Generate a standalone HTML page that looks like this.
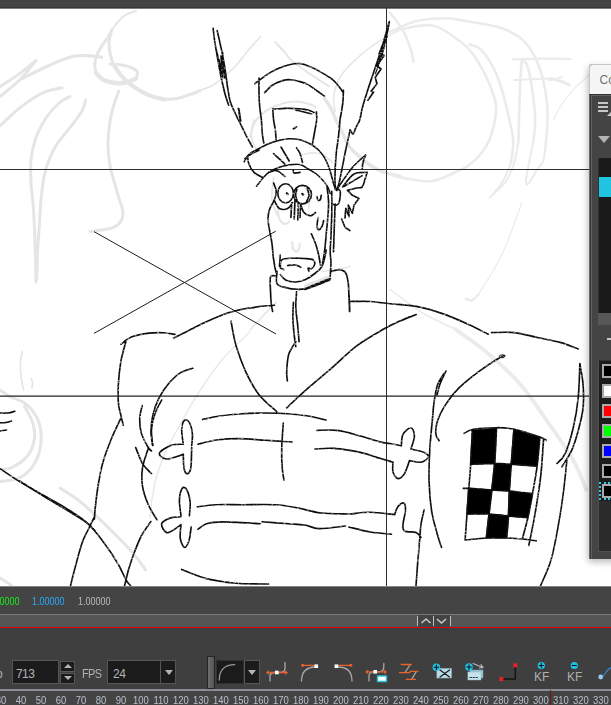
<!DOCTYPE html>
<html><head><meta charset="utf-8"><title>Animation Editor</title>
<style>
html,body{margin:0;padding:0;background:#fff;}
body{-webkit-font-smoothing:antialiased;width:611px;height:705px;position:relative;overflow:hidden;font-family:"Liberation Sans",sans-serif;}
.abs{position:absolute;}
#topbar{left:0;top:0;width:611px;height:9px;background:#444;border-bottom:1px solid #7c7c7c;box-sizing:border-box;box-shadow:inset 0 -1px 0 #383838;}
#canvas{left:0;top:9px;width:611px;height:577px;background:#fff;}
#bottom{left:0;top:586px;width:611px;height:119px;background:#444;}
#vals span{position:absolute;top:9px;font-size:11.4px;line-height:12px;white-space:nowrap;transform:scaleX(0.79);transform-origin:0 50%;}
#hline{left:0;top:28px;width:611px;height:1px;background:#787878;}
#band{left:0;top:29px;width:611px;height:12px;background:#555;}
#redline{left:0;top:41px;width:611px;height:1px;background:#e10000;}
#lower{left:0;top:42px;width:611px;height:77px;background:#3f3f3f;}
.inp{position:absolute;background:#1b1b1b;border:1px solid #565656;box-sizing:border-box;color:#b4b4b4;font-size:12px;line-height:22px;}
.lbl{position:absolute;color:#b0b0b0;font-size:12px;line-height:14px;white-space:nowrap;}
#ruler{left:0;top:103px;width:611px;height:16px;background:#444;border-top:2px solid #8b8e96;box-sizing:border-box;}
#ruler span{position:absolute;top:3px;width:30px;margin-left:-15px;text-align:center;font-size:11.7px;line-height:12px;color:#b9c0cc;transform:scaleX(0.81);}
#panel{left:589px;top:64px;width:41px;height:495px;background:#444;box-shadow:-1px 3px 7px rgba(0,0,0,0.28);border-radius:4px 0 0 2px;}
#ptitle{left:0;top:0;width:41px;height:30px;background:#f5f5f5;border-top-left-radius:4px;border:1px solid #c6c6c6;border-right:0;border-bottom:0;box-sizing:border-box;color:#6e6e6e;font-size:12px;line-height:30px;}
.sw{position:absolute;left:13px;width:20px;height:14px;box-sizing:border-box;border:2px solid #aaa;}
</style></head>
<body>
<div id="topbar" class="abs"></div>
<div id="canvas" class="abs"></div>

<svg class="abs" style="left:0;top:0" width="611" height="586" viewBox="0 0 611 586" fill="none" stroke-linecap="round" stroke-linejoin="round">
<g stroke="#e5e5e5">
<path stroke-width="2" d="M136.0 11.0C134.0 11.8 127.8 13.2 124.0 16.0C120.2 18.8 116.0 24.0 113.0 28.0C110.0 32.0 107.2 38.0 106.0 40.0M275.3 42.0C276.9 43.8 282.4 49.7 285.0 52.7C287.6 55.7 287.8 57.1 291.0 60.0C294.2 62.9 299.4 66.5 304.0 69.8C308.6 73.1 314.6 76.9 318.7 79.6C322.8 82.3 327.0 85.1 328.6 86.2M250.0 137.0C250.8 134.5 252.3 126.4 255.0 122.0C257.7 117.6 261.8 113.8 266.4 110.7C271.0 107.6 277.3 104.9 282.7 103.4C288.1 101.9 294.1 101.4 299.0 101.7C303.9 102.0 309.2 104.0 312.0 105.0C314.8 106.0 314.9 107.1 315.5 107.5M278.0 207.0C278.2 208.8 278.0 215.2 279.0 218.0C280.0 220.8 282.3 223.3 284.0 224.0C285.7 224.7 288.2 222.3 289.0 222.0M292.0 242.0C292.3 243.3 293.0 248.5 294.0 250.0C295.0 251.5 297.0 252.0 298.0 251.0C299.0 250.0 299.7 245.2 300.0 244.0M305.0 187.0C305.7 188.5 308.3 192.5 309.0 196.0C309.7 199.5 309.0 206.0 309.0 208.0M292.0 248.0C292.7 248.7 294.8 251.8 296.0 252.0C297.2 252.2 298.5 249.5 299.0 249.0"/>
<path stroke-width="3" d="M106.0 40.0C104.7 42.0 100.0 48.3 98.1 52.3C96.2 56.3 95.1 60.5 94.8 64.0C94.5 67.5 95.9 71.7 96.1 73.2M136.0 78.4C136.2 77.3 138.3 73.8 137.4 71.9C136.5 70.1 133.7 68.5 130.8 67.3C128.0 66.1 123.8 65.2 120.3 64.7C116.8 64.2 111.6 64.4 109.9 64.3M111.8 30.0C111.4 31.8 109.5 36.8 109.2 40.5C108.9 44.2 109.2 48.4 109.9 52.3C110.6 56.2 112.6 62.0 113.1 64.0M165.0 99.4C167.0 99.2 172.3 99.5 177.0 98.5C181.7 97.5 189.2 94.8 193.0 93.5C196.8 92.2 198.8 91.0 200.0 90.5M0.0 86.7C3.3 84.5 13.6 78.0 19.6 73.6C25.6 69.2 33.3 62.7 36.0 60.5M36.0 60.5C33.3 63.8 25.6 74.0 19.6 80.0C13.6 86.0 3.3 93.8 0.0 96.5M19.6 80.0C24.5 77.6 39.8 69.5 49.0 65.5C58.2 61.5 66.2 57.4 75.0 56.0C83.8 54.6 97.1 56.8 101.5 57.0M62.0 87.7C58.8 88.6 49.6 89.6 42.5 93.0C35.4 96.4 26.7 102.5 19.6 108.0C12.5 113.5 3.3 123.0 0.0 126.0M70.0 96.5C68.2 97.6 63.0 99.4 59.0 103.0C55.0 106.6 49.8 112.2 46.0 118.0C42.2 123.8 38.5 130.5 36.0 137.5C33.5 144.5 31.8 152.4 31.0 160.0C30.2 167.6 30.7 176.3 31.0 183.0C31.3 189.7 32.1 192.8 32.7 200.0C33.3 207.2 34.0 217.3 34.4 226.0C34.8 234.7 35.0 242.7 35.3 252.0C35.6 261.3 35.9 277.0 36.0 282.0M85.7 100.0C85.1 101.8 84.6 106.4 82.0 111.0C79.4 115.6 74.2 122.1 70.0 127.6C65.8 133.1 60.5 138.6 57.0 144.0C53.5 149.4 51.2 154.5 49.0 160.0C46.8 165.5 45.3 170.3 44.0 177.0C42.7 183.7 41.8 191.8 41.0 200.0C40.2 208.2 39.9 217.3 39.3 226.0C38.7 234.7 38.0 243.0 37.6 252.0C37.2 261.0 36.9 275.3 36.7 280.0M118.5 91.6C117.6 94.3 114.5 102.6 113.0 108.0C111.5 113.4 110.4 118.0 109.6 124.0C108.8 130.0 108.0 137.4 108.0 144.0C108.0 150.6 108.5 157.1 109.6 163.6C110.7 170.1 112.8 176.9 114.5 183.0C116.2 189.1 118.1 195.5 119.5 200.0C120.9 204.5 122.3 206.7 122.7 210.0C123.1 213.3 123.2 216.8 121.8 219.6C120.4 222.4 118.0 225.1 114.6 226.8C111.2 228.5 105.6 229.2 101.5 230.0C97.4 230.8 91.9 231.4 90.0 231.7M0.0 390.0C1.6 391.1 5.7 394.3 9.8 396.5C13.9 398.7 20.1 399.8 24.5 403.0C28.9 406.2 33.2 411.1 36.0 416.0C38.8 420.9 40.5 426.5 41.0 432.5C41.5 438.5 41.0 446.0 39.3 452.0C37.6 458.0 34.5 464.2 31.0 468.6C27.4 473.0 23.2 476.2 18.0 478.4C12.8 480.6 3.0 481.1 0.0 481.6M24.5 406.4C25.9 409.1 31.1 417.3 32.7 422.7C34.4 428.1 35.2 433.5 34.4 439.0C33.6 444.5 31.4 450.8 27.8 455.5C24.2 460.2 17.6 464.6 13.0 467.0C8.4 469.4 2.2 469.5 0.0 470.0M60.5 488.2C64.0 490.7 74.4 497.0 81.8 503.0C89.2 509.0 97.6 517.4 104.7 524.2C111.8 531.0 118.9 538.1 124.4 543.8C129.9 549.5 134.0 554.2 137.5 558.6C141.0 563.0 144.2 568.1 145.6 570.0M0.0 578.0C1.3 578.8 6.0 581.7 8.0 583.0C10.0 584.3 11.3 585.5 12.0 586.0"/>
<path stroke-width="4.4" d="M96.1 73.2C97.3 74.3 100.1 78.1 103.3 79.7C106.5 81.3 111.2 82.5 115.1 83.0C119.0 83.5 123.4 83.2 126.9 82.4C130.4 81.6 134.5 79.1 136.0 78.4"/>
<path stroke-width="4.2" d="M113.1 64.0C114.3 65.8 117.6 71.2 120.3 74.5C123.0 77.8 126.0 80.9 129.5 83.7C133.0 86.5 137.4 89.3 141.3 91.5C145.2 93.7 149.2 95.5 153.1 96.8C157.0 98.1 163.0 99.0 165.0 99.4"/>
<path stroke-width="1.6" d="M200.0 90.5C202.3 89.5 208.6 88.1 214.0 84.5C219.4 80.9 226.9 74.8 232.7 69.0C238.5 63.2 244.4 54.9 249.0 49.5C253.6 44.1 258.6 38.6 260.5 36.4M22.3 351.0C22.0 353.1 20.5 359.1 20.3 363.7C20.1 368.3 20.8 374.0 21.3 378.4C21.9 382.8 23.2 388.1 23.6 390.0M31.0 378.4C31.2 379.0 32.3 380.4 32.5 382.0C32.7 383.6 32.1 387.0 32.0 388.0"/>
<path stroke-width="2.6" d="M85.0 55.5C86.3 55.6 90.2 55.7 93.0 56.0C95.8 56.3 100.5 57.2 102.0 57.5"/>
<path stroke-width="1.4" d="M119.7 90.2C119.0 91.8 116.7 96.7 115.5 100.0C114.3 103.3 113.0 108.3 112.5 110.0"/>
<path stroke-width="1.2" d="M250.0 331.9C245.5 336.4 231.4 348.7 222.8 358.9C214.2 369.1 205.2 382.6 198.2 393.3C191.2 404.0 186.2 413.5 181.0 422.8C175.8 432.1 171.0 440.3 167.0 449.0C163.0 457.7 159.5 466.8 157.0 475.0C154.5 483.2 153.4 490.8 152.2 498.0C151.0 505.2 150.4 514.7 150.0 518.0"/>
<path stroke-width="3.4" d="M324.5 98.6C325.6 100.2 329.1 104.8 331.0 108.4C332.9 112.0 334.1 115.9 336.0 120.0C337.9 124.1 340.4 128.6 342.6 133.0C344.8 137.4 346.1 142.1 349.1 146.2C352.1 150.3 356.5 154.0 360.6 157.6C364.7 161.2 369.2 164.9 373.6 167.5C378.0 170.1 382.3 171.7 386.7 173.2C391.1 174.7 397.8 175.9 400.0 176.5"/>
<path stroke-width="1.5" d="M400.0 29.8C397.0 31.4 387.6 36.1 381.8 39.6C376.1 43.1 370.7 46.9 365.5 51.0C360.3 55.1 354.8 60.1 350.7 64.2C346.6 68.3 343.5 71.5 340.9 75.6C338.3 79.7 336.4 84.6 335.2 88.7C334.0 92.8 333.6 96.4 333.6 100.2C333.6 104.0 334.9 109.8 335.2 111.7M254.0 120.0C253.6 121.6 251.9 126.3 251.6 129.8C251.3 133.4 251.6 138.0 252.4 141.3C253.2 144.6 255.8 148.1 256.5 149.5M273.6 177.3C273.3 180.9 271.4 192.3 272.0 198.6C272.6 204.9 276.2 212.3 277.0 215.0M300.0 155.2C302.2 154.8 308.9 152.6 313.0 152.7C317.1 152.8 321.2 154.4 324.5 156.0C327.8 157.6 331.3 161.4 332.7 162.5M250.0 330.2C252.0 328.0 257.6 321.6 262.0 317.0C266.4 312.4 273.8 304.8 276.2 302.4M322.0 271.3C324.3 271.1 331.3 270.8 336.0 270.0C340.7 269.2 347.7 267.0 350.0 266.4"/>
<path stroke-width="6" d="M307.0 286.5C308.5 286.0 312.3 284.8 316.0 283.5C319.7 282.2 326.8 279.3 329.0 278.5"/>
</g>
<g stroke="#ebebeb">
<path stroke-width="2.6" d="M390.0 32.0C394.2 30.2 406.3 23.6 415.5 21.3C424.7 19.0 437.4 18.4 445.3 18.3C453.2 18.2 457.0 19.7 463.0 20.6C469.0 21.5 474.7 22.3 481.3 23.6C487.9 24.9 495.9 25.9 502.6 28.5C509.3 31.1 516.4 34.5 521.7 39.1C527.0 43.7 531.0 49.5 534.5 56.2C538.0 63.0 540.9 71.4 543.0 79.6C545.1 87.8 546.5 97.3 547.2 105.1C547.9 112.9 547.6 118.9 547.2 126.4C546.9 133.9 545.5 146.1 545.1 150.0M390.0 12.8C392.1 15.6 399.2 23.4 402.8 29.8C406.4 36.2 409.5 45.7 411.3 51.0C413.1 56.3 413.0 59.9 413.4 61.7M398.5 29.8C404.2 29.1 422.4 23.6 432.6 25.5C442.9 27.4 453.3 36.5 460.0 41.3C466.7 46.0 468.6 48.3 472.8 54.0C477.1 59.7 482.0 68.2 485.5 75.3C489.0 82.4 492.2 90.5 494.0 96.6C495.8 102.7 496.7 104.9 496.0 112.0C495.3 119.1 492.6 131.7 489.8 139.0C487.0 146.3 482.9 151.4 479.0 156.0C475.1 160.6 469.6 164.5 466.4 166.8C463.2 169.1 465.6 167.6 460.0 170.0C454.4 172.4 441.4 179.6 432.6 181.0C423.8 182.4 414.1 179.8 407.0 178.7C399.9 177.6 392.8 175.2 390.0 174.5M469.6 44.5C471.6 45.4 477.2 45.7 481.3 49.8C485.4 53.9 490.4 61.8 494.0 68.9C497.6 76.0 500.1 84.1 502.6 92.3C505.1 100.5 507.2 109.8 509.0 118.0C510.8 126.2 512.9 133.9 513.2 141.3C513.5 148.7 511.4 159.1 511.0 162.6M521.7 60.4C521.5 64.3 520.6 74.6 520.2 83.8C519.8 93.0 519.4 106.1 519.1 115.7C518.8 125.3 518.6 137.0 518.5 141.3M521.7 60.4C522.6 61.1 525.4 60.8 527.0 64.7C528.6 68.6 529.9 74.9 531.3 83.8C532.7 92.7 534.9 108.4 535.2 118.0C535.6 127.6 533.7 137.4 533.4 141.3"/>
<path stroke-width="2" d="M545.1 150.0C544.8 151.9 544.4 157.9 543.0 161.3C541.6 164.7 538.6 167.6 536.6 170.6C534.6 173.6 532.9 177.2 531.3 179.6C529.7 182.0 527.7 184.1 527.0 185.0M511.0 162.6C509.6 165.8 506.1 175.8 502.6 181.7C499.1 187.5 491.9 195.0 489.8 197.7M518.5 141.3C517.8 144.9 516.4 155.9 514.3 162.6C512.2 169.3 509.8 175.8 505.7 181.7C501.6 187.5 492.4 195.0 489.8 197.7M533.4 141.3C532.7 144.9 530.3 156.2 529.1 162.6C527.9 169.0 526.4 175.9 526.0 179.6C525.6 183.3 526.8 184.1 527.0 185.0M549.0 80.6L562.0 77.0"/>
<path stroke-width="2.2" d="M513.2 59.4C517.7 59.3 530.4 58.7 540.0 58.6C549.6 58.5 565.5 58.9 570.6 58.9M514.3 80.0L551.5 78.5"/>
<path stroke-width="3" d="M551.5 78.5C552.9 78.9 557.0 79.9 560.0 81.0C563.0 82.1 568.0 84.2 569.6 84.9"/>
<path stroke-width="1.2" d="M590.0 74.3C587.1 77.0 577.8 84.7 572.8 90.2C567.8 95.7 563.2 102.2 560.0 107.2C556.8 112.2 554.7 117.9 553.6 120.0M521.7 203.0C520.3 206.9 516.2 218.6 513.2 226.4C510.3 234.2 507.1 243.0 504.0 250.0C500.9 257.0 499.0 260.8 494.7 268.2C490.4 275.6 481.1 290.0 478.4 294.4"/>
<path stroke-width="1.5" d="M390.0 289.4C391.4 290.4 393.1 291.8 398.5 295.7C403.9 299.6 413.2 307.4 422.7 313.0C432.2 318.6 450.0 326.6 455.5 329.3"/>
<path stroke-width="3.8" d="M455.5 329.3C460.9 333.3 477.3 344.2 488.2 353.5C499.1 362.8 511.1 373.8 520.9 385.0C530.7 396.2 538.4 408.5 547.1 421.0C555.8 433.5 566.8 448.7 573.3 460.2C579.8 471.7 584.2 485.0 586.4 490.0"/>
<path stroke-width="2.4" d="M478.4 294.4C477.3 295.4 474.1 299.5 472.0 300.3C469.9 301.1 467.0 299.2 466.0 299.0"/>
</g>
<g stroke="#2e2e2e" stroke-width="1" shape-rendering="crispEdges">
<path d="M0 169.5H590M386.5 8V586"/>
<path shape-rendering="auto" stroke="#222" stroke-width="1.3" d="M0 396.15H590"/>
</g>
<g stroke="#1c1c1c" stroke-width="1">
<path d="M94.3 231.8L275.7 333.8M94.3 333.2L275.4 231.4"/>
</g>
<g fill="#000" stroke="#000" stroke-width="0.8">
<path d="M472.5 430.1L496.5 428.3L494.7 463.4L470.7 464.3Z"/>
<path d="M514.0 429.2L539.9 437.5L537.1 466.1L511.3 464.3Z"/>
<path d="M494.7 463.4L511.3 464.3L509.4 491.0L491.9 490.0Z"/>
<path d="M468.8 488.3L491.9 490.0L489.1 514.0L467.0 514.0Z"/>
<path d="M509.4 491.0L532.5 493.8L527.9 517.8L508.5 516.0Z"/>
<path d="M489.1 514.0L508.5 516.0L506.7 538.0L486.4 538.0Z"/>
</g>
<defs><filter id="pencil" x="0" y="0" width="611" height="586" filterUnits="userSpaceOnUse"><feTurbulence type="fractalNoise" baseFrequency="0.3 0.55" numOctaves="3" seed="7" result="n"/><feColorMatrix in="n" type="matrix" values="0 0 0 0 0  0 0 0 0 0  0 0 0 0 0  0 0 0 -2.4 2.3" result="a"/><feComposite in="SourceGraphic" in2="a" operator="in"/></filter></defs>
<g stroke="#0c0c0c" filter="url(#pencil)">
<path stroke-width="1.65" d="M213.1 28.2C213.4 30.4 214.0 36.7 214.7 41.3C215.4 45.9 216.2 50.5 217.2 56.0C218.2 61.5 219.3 68.0 220.5 74.0C221.7 80.0 223.2 86.8 224.5 92.0C225.8 97.2 227.9 102.9 228.6 105.1M217.2 30.6C217.6 32.4 218.8 37.6 219.6 41.3C220.4 45.0 221.3 48.6 222.1 52.7C222.9 56.8 223.8 61.7 224.5 65.8C225.2 69.9 225.6 73.5 226.2 77.3C226.8 81.1 227.1 84.6 227.8 88.7C228.5 92.8 229.1 97.7 230.3 101.8C231.5 105.9 233.8 110.3 235.2 113.3C236.6 116.3 237.5 118.0 238.5 120.0C239.5 122.0 239.7 122.3 241.0 125.0C242.3 127.7 244.7 132.7 246.6 136.4C248.5 140.1 251.4 145.2 252.4 147.0M216.0 49.0L219.0 62.0L217.5 55.0L221.0 70.0L219.0 60.0L222.5 77.0L221.0 56.0L223.5 72.0L222.5 52.0L224.5 78.0M254.8 83.8C256.6 82.4 261.8 78.1 265.5 75.6C269.2 73.1 273.2 70.8 277.0 69.0C280.8 67.2 284.6 65.9 288.4 65.0C292.2 64.1 296.4 63.3 300.0 63.6C303.6 63.9 306.2 65.1 309.8 66.6C313.4 68.1 317.5 70.2 321.3 72.4C325.1 74.6 329.7 77.2 332.7 79.7C335.7 82.2 337.5 84.9 339.3 87.1C341.1 89.3 342.7 91.8 343.4 92.8M259.0 78.0C259.0 80.6 258.9 88.8 259.0 93.6C259.1 98.4 259.3 102.3 259.7 106.7C260.1 111.1 261.0 115.6 261.4 120.0C261.8 124.4 261.8 129.2 262.2 133.0C262.6 136.8 263.5 141.3 263.8 143.0M264.6 92.8C265.8 91.6 269.1 87.5 272.0 85.5C274.9 83.5 278.8 81.9 281.8 80.9C284.8 79.9 287.0 79.6 290.0 79.7C293.0 79.8 297.0 80.8 300.0 81.6C303.0 82.4 305.5 83.1 308.2 84.6C310.9 86.1 313.7 88.5 316.4 90.4C319.1 92.3 323.1 95.1 324.5 96.1M343.4 90.4C343.3 92.3 343.3 97.7 342.9 101.8C342.5 105.9 341.4 112.0 340.9 115.0C340.4 118.0 340.4 116.4 340.0 120.0C339.6 123.6 339.1 131.0 338.5 136.4C337.9 141.8 336.9 147.3 336.3 152.7C335.8 158.1 335.4 163.5 335.2 169.0C335.0 174.5 334.9 181.9 335.2 185.5C335.5 189.1 336.5 189.6 336.8 190.4M296.0 110.2C297.3 110.5 301.4 111.4 304.0 112.0C306.6 112.6 310.2 113.7 311.5 114.0M272.8 109.2C272.9 111.0 273.2 116.6 273.6 120.0C274.0 123.4 274.9 126.5 275.3 129.8C275.7 133.1 276.0 138.0 276.1 139.6M316.4 111.7C316.4 113.1 317.0 116.7 316.7 120.0C316.4 123.3 315.4 127.4 314.7 131.5C314.0 135.6 312.7 142.3 312.3 144.5M389.2 21.6C388.5 24.1 386.6 31.2 385.1 36.4C383.6 41.6 382.1 46.7 380.2 52.7C378.3 58.7 375.8 65.9 373.6 72.4C371.4 79.0 369.0 86.0 367.1 92.0C365.2 98.0 363.4 103.7 362.2 108.4C361.0 113.1 360.8 116.7 359.7 120.0C358.6 123.3 356.7 125.9 355.6 128.2C354.5 130.5 354.1 133.7 353.2 134.0C352.3 134.3 350.5 130.5 350.0 129.8M389.2 22.5C388.8 24.5 387.9 30.2 386.7 34.7C385.5 39.2 383.4 44.6 381.8 49.5C380.2 54.4 377.7 61.8 376.9 64.2M386.0 36.0L379.0 54.0L384.3 55.2L376.9 65.8L381.0 69.0L375.3 77.3L376.9 83.8L371.2 91.2L373.6 92.0L367.9 100.2M350.0 129.8C349.9 130.6 349.8 131.4 349.1 134.7C348.4 138.0 346.9 144.3 345.8 149.5C344.7 154.7 343.7 160.4 342.6 165.8C341.5 171.2 340.2 178.4 339.3 182.2C338.4 186.0 337.6 187.6 337.3 188.7M247.5 156.8C247.8 158.0 247.9 161.6 249.0 164.2C250.1 166.8 251.8 170.2 254.0 172.4C256.2 174.6 260.8 176.5 262.2 177.3M273.6 153.6L285.0 164.2M281.0 147.0L289.2 161.0M296.6 147.8C297.2 148.8 299.0 151.1 300.0 153.5C301.0 155.9 302.1 161.0 302.5 162.5M268.7 172.4C270.1 172.1 274.3 170.0 277.0 170.7C279.7 171.4 283.7 175.5 285.0 176.5M293.3 170.0C293.4 170.5 292.9 172.6 294.0 173.0C295.1 173.4 299.0 172.5 300.0 172.4M273.6 183.0C274.0 184.4 276.1 188.6 276.2 191.3C276.3 194.1 275.6 196.5 274.5 199.5C273.4 202.5 270.7 206.1 269.6 209.3C268.5 212.6 268.0 215.4 268.0 219.0C268.0 222.6 268.9 226.5 269.6 230.6C270.3 234.7 271.4 239.5 272.0 243.6C272.6 247.7 272.7 252.3 273.0 255.0C273.3 257.7 273.3 257.4 273.7 259.8C274.1 262.2 274.8 267.2 275.4 269.6C275.9 272.1 276.7 273.7 277.0 274.5M277.8 193.3a7.8 9.6 0 1 0 15.6 0a7.8 9.6 0 1 0 -15.6 0M293.5 194.6a9.0 9.2 0 1 0 18.0 0a9.0 9.2 0 1 0 -18.0 0M307.4 188.7C307.7 189.8 309.1 193.1 309.0 195.3C308.9 197.5 306.9 200.7 306.5 201.8M296.8 189.5C296.6 190.4 295.6 193.2 295.6 195.0C295.6 196.8 296.8 199.6 297.0 200.5M274.5 201.0C275.3 202.2 277.3 207.2 279.5 208.5C281.7 209.8 285.4 209.5 287.6 208.5C289.8 207.5 291.7 203.7 292.5 202.7M300.7 204.4C301.2 205.8 302.4 210.6 304.0 212.5C305.6 214.4 308.7 215.8 310.6 215.8C312.5 215.8 314.7 213.1 315.5 212.5M291.7 202.7L290.9 217.5M295.0 199.5L294.2 219.0M298.3 202.0L297.8 220.0M300.7 204.4L300.0 217.5M317.1 196.5C317.2 197.1 317.4 199.8 318.0 200.3C318.6 200.8 319.9 200.3 320.4 199.5C320.9 198.7 321.1 196.1 321.2 195.4M318.0 217.5C317.9 218.8 317.0 223.6 317.1 225.6C317.2 227.6 317.9 229.5 318.7 229.7C319.5 229.8 321.2 228.0 322.0 226.5C322.8 225.0 323.3 221.7 323.6 220.7M311.4 233.8C312.1 235.4 314.3 240.1 315.5 243.6C316.7 247.1 317.9 251.4 318.7 255.0C319.5 258.6 320.1 263.3 320.4 265.0M327.0 186.4C327.3 189.1 328.5 197.3 328.6 202.7C328.7 208.1 328.1 213.5 327.7 219.0C327.3 224.5 326.6 230.0 326.1 235.5C325.6 241.0 325.2 246.7 324.5 251.8C323.8 256.9 322.4 264.0 322.0 266.4M331.8 191.3C331.8 194.6 331.9 203.6 331.8 211.0C331.7 218.4 331.3 228.7 331.0 235.5C330.7 242.3 330.2 247.2 330.2 251.8C330.2 256.4 331.0 258.9 331.0 263.0C331.0 267.1 330.3 274.0 330.2 276.2M335.1 204.0C335.0 207.9 334.6 219.3 334.3 227.3C334.0 235.3 333.6 247.7 333.5 251.8M335.2 189.6C336.0 189.7 339.3 188.4 340.0 190.4C340.7 192.4 339.8 199.4 339.3 201.8C338.8 204.2 337.9 204.6 336.8 205.0C335.7 205.4 333.4 204.4 332.7 204.3M365.5 155.2C365.1 156.4 363.6 160.2 363.0 162.5C362.4 164.8 362.3 167.9 362.2 169.0M342.6 187.0C344.5 184.8 349.9 176.4 354.0 174.0C358.1 171.6 364.9 172.7 367.1 172.4M344.2 186.3L362.2 175.6M367.1 172.4C366.7 173.8 365.4 178.2 364.6 180.6C363.8 183.0 363.6 185.8 362.2 187.0C360.8 188.2 358.9 187.4 356.5 188.0C354.1 188.6 349.0 190.0 347.5 190.4M347.5 190.4L352.4 195.3L358.9 198.6L354.0 205.0L352.4 213.3L348.3 205.0L349.1 216.6L345.8 208.4L345.0 218.0M341.7 219.0L345.0 227.3L350.0 230.6M280.3 268.0C280.6 266.6 279.8 261.4 281.9 259.8C283.9 258.2 288.9 258.4 292.6 258.2C296.3 258.0 300.6 258.2 304.0 258.5C307.4 258.8 311.2 258.8 313.0 259.8C314.8 260.8 314.9 263.2 314.6 264.7C314.3 266.2 312.5 268.2 311.4 268.8C310.3 269.4 308.5 267.6 308.1 268.0C307.7 268.4 308.8 270.8 308.9 271.3M280.3 268.0L283.6 269.6M280.3 255.0L279.5 266.4M287.6 265.5C288.8 265.4 292.8 264.7 295.0 265.0C297.2 265.3 299.8 266.8 300.7 267.2M280.3 274.5C281.2 275.5 283.4 279.1 286.0 280.3C288.6 281.6 292.5 282.1 295.8 282.0C299.1 281.9 302.3 281.0 305.6 279.5C308.9 278.0 312.8 275.2 315.5 273.0C318.2 270.8 320.4 269.4 322.0 266.4C323.6 263.4 324.6 257.7 325.3 255.0C326.0 252.3 326.0 250.8 326.1 250.0M277.0 271.3C277.0 273.4 275.5 280.9 277.0 283.6C278.5 286.3 282.6 286.7 286.0 287.6C289.4 288.6 294.2 289.2 297.5 289.3C300.8 289.4 302.6 289.3 305.6 288.5C308.6 287.7 312.2 285.8 315.5 284.4C318.8 283.0 322.9 281.3 325.3 280.3C327.8 279.3 329.4 278.9 330.2 278.6M275.4 275.9C274.6 276.1 271.3 274.5 270.5 277.0C269.7 279.5 270.4 286.5 270.5 291.0C270.6 295.5 270.9 300.6 271.3 304.0C271.7 307.4 272.4 310.2 272.6 311.4M250.0 308.1C251.6 307.8 255.7 307.0 259.8 306.5C263.9 306.0 272.1 305.5 274.5 305.3M331.8 271.3C333.2 271.0 337.7 269.3 340.0 269.6C342.3 269.9 344.3 270.8 345.7 273.0C347.1 275.2 347.6 278.4 348.2 282.7C348.8 287.0 348.9 296.3 349.0 299.0M296.6 291.7C296.5 294.3 295.7 302.0 295.8 307.3C295.9 312.6 296.9 317.9 297.5 323.6C298.1 329.3 298.8 338.7 299.1 341.7M293.4 302.4C293.3 305.1 292.8 313.2 292.9 318.7C293.0 324.1 293.7 330.5 294.2 335.1C294.7 339.8 295.5 344.7 295.8 346.6M295.8 341.7C295.3 342.5 293.8 344.3 292.6 346.6C291.4 348.9 289.4 351.3 288.4 355.5C287.4 359.7 286.9 367.6 286.7 371.8C286.5 376.1 287.3 379.5 287.4 381.0M121.0 344.2C122.8 343.0 127.2 338.6 131.9 336.8C136.6 335.0 143.8 333.8 149.1 333.1C154.4 332.4 159.5 332.5 163.8 332.7C168.1 332.9 173.1 334.1 174.9 334.4M173.7 338.0C176.1 336.8 183.5 333.1 188.4 330.7C193.3 328.2 197.4 326.0 203.1 323.3C208.8 320.6 217.1 316.9 222.8 314.7C228.5 312.5 233.0 311.4 237.5 310.3C242.0 309.2 247.9 308.2 250.0 307.8M349.6 301.5C353.0 301.5 363.5 301.1 370.2 301.5C376.9 301.9 382.1 302.9 389.8 303.7C397.5 304.5 407.4 304.8 416.2 306.4C425.0 308.0 433.7 310.6 442.4 313.6C451.1 316.6 461.0 321.0 468.6 324.4C476.2 327.8 484.9 332.6 488.2 334.2M491.5 332.6C495.3 332.6 506.8 331.8 514.4 332.6C522.0 333.4 529.7 335.9 537.3 337.5C544.9 339.1 553.4 340.5 560.2 342.4C567.0 344.3 575.2 347.9 578.2 349.0M231.0 321.0C231.8 325.1 233.5 337.1 236.0 345.6C238.5 354.1 242.0 363.6 245.8 371.8C249.6 380.0 253.8 388.0 259.0 394.7C264.2 401.4 274.0 408.9 277.0 411.8M286.7 407.8C290.2 404.5 300.6 394.7 308.0 388.2C315.4 381.7 322.8 375.7 331.0 368.6C339.2 361.5 348.3 352.2 357.0 345.6C365.7 339.1 376.1 333.4 383.3 329.3C390.5 325.2 394.5 323.5 400.0 321.0C405.5 318.5 413.5 315.6 416.2 314.5M125.8 341.7C125.0 345.0 122.1 354.4 120.9 361.4C119.7 368.4 118.8 376.6 118.4 383.5C118.0 390.4 118.0 397.7 118.4 403.0C118.8 408.3 120.1 411.7 120.9 415.4C121.7 419.1 122.9 423.6 123.3 425.2M121.0 417.8C119.4 421.3 114.3 431.6 111.3 439.0C108.3 446.4 105.2 454.3 103.0 462.0C100.8 469.7 99.4 477.9 98.2 485.0C97.0 492.1 96.2 498.9 95.6 504.6C94.9 510.3 94.5 516.8 94.3 519.3M95.0 516.0C93.8 518.3 90.2 525.4 88.0 530.0C85.8 534.6 84.2 536.6 81.8 543.8C79.4 551.0 75.5 566.2 73.6 573.3C71.7 580.4 70.9 584.2 70.4 586.4M192.8 368.3C190.8 369.0 185.0 369.9 181.0 372.4C177.0 374.9 172.4 379.2 168.7 383.5C165.0 387.8 161.6 392.9 158.9 398.2C156.2 403.5 154.1 409.8 152.8 415.4C151.5 421.0 151.0 427.0 151.0 432.0C151.0 437.0 152.4 443.2 152.7 445.4M142.2 405.6C141.8 407.7 140.0 413.4 139.8 417.9C139.6 422.4 139.8 427.8 141.2 432.6C142.5 437.5 146.2 443.9 147.9 447.0C149.6 450.1 150.9 450.3 151.5 451.0M135.7 447.6C136.8 450.2 139.9 459.1 142.5 463.5C145.1 467.9 150.0 472.0 151.5 473.7M148.1 448.8C147.2 452.0 143.4 461.8 142.5 468.0C141.6 474.2 141.6 480.1 142.5 486.2C143.4 492.2 145.7 498.6 148.1 504.3C150.5 510.0 155.7 517.6 157.2 520.2M150.8 521.5C149.2 523.9 144.0 530.9 141.3 536.0C138.6 541.1 136.6 546.7 134.5 552.0C132.4 557.3 130.7 562.3 129.0 568.0C127.3 573.7 125.2 583.3 124.4 586.4M19.6 481.0C23.8 483.7 36.6 491.8 45.0 497.0C53.4 502.2 62.8 507.5 70.0 512.0C77.2 516.5 82.6 518.9 88.4 524.2C94.2 529.5 99.8 537.2 104.7 543.8C109.6 550.3 114.2 557.5 117.8 563.5C121.3 569.5 123.8 576.0 126.0 579.8C128.2 583.6 130.2 585.3 131.0 586.4M0.0 413.0C1.3 413.0 5.6 413.3 8.0 413.0C10.4 412.7 13.6 411.6 14.7 411.3M0.0 422.7C1.0 422.7 4.1 422.8 6.0 422.5C7.9 422.2 10.6 421.2 11.5 421.0M0.0 431.0L6.5 430.0M183.3 444.2C183.0 441.8 181.5 433.5 181.7 429.5C181.9 425.5 183.1 421.5 184.4 420.4C185.7 419.3 188.1 420.4 189.4 422.7C190.7 425.0 192.0 430.2 192.4 434.0C192.8 437.8 191.8 443.5 191.7 445.4M183.3 444.2C181.2 444.4 174.8 443.9 170.8 445.4C166.8 446.9 160.2 451.0 159.5 453.3C158.8 455.6 162.3 458.8 166.3 459.0C170.3 459.2 180.5 455.2 183.3 454.4M183.3 454.4C183.4 456.7 183.4 464.8 184.0 468.0C184.6 471.2 186.0 473.7 187.1 473.7C188.2 473.7 190.0 472.4 190.8 468.0C191.6 463.6 191.5 451.0 191.7 447.6M181.0 515.6C180.7 513.0 179.2 504.3 179.4 499.8C179.6 495.3 181.0 490.1 182.2 488.4C183.4 486.7 185.4 487.3 186.7 489.6C188.0 491.9 189.6 497.7 190.1 502.0C190.6 506.3 189.5 513.3 189.4 515.6M181.0 516.8C179.3 517.0 174.0 516.8 170.8 517.9C167.6 519.0 162.3 521.1 161.7 523.6C161.1 526.1 164.2 532.5 167.4 532.7C170.6 532.9 178.7 526.0 181.0 524.7M181.0 524.7C180.9 527.0 179.7 534.5 180.3 538.3C180.9 542.1 183.0 547.0 184.4 547.4C185.8 547.8 187.9 544.0 189.0 540.6C190.1 537.2 190.8 529.3 191.2 527.0M202.6 419.5C205.4 418.9 212.9 417.0 219.6 416.0C226.3 415.0 234.9 414.2 242.6 413.7C250.2 413.2 257.9 413.0 265.5 413.0C273.1 413.0 281.3 413.2 288.4 413.7C295.5 414.2 301.7 414.9 308.0 416.0C314.3 417.1 323.0 419.3 326.0 420.0M198.0 444.2C201.0 443.5 209.4 440.9 216.2 440.0C223.0 439.1 230.8 438.6 239.0 438.6C247.2 438.7 256.4 439.7 265.3 440.3C274.2 440.9 287.6 441.7 292.1 442.0M317.0 430.4C320.4 430.4 330.1 429.5 337.3 430.4C344.5 431.3 353.1 434.1 360.2 436.0C367.3 437.9 374.9 440.6 379.9 441.9C384.9 443.1 386.4 442.9 390.0 443.5C393.6 444.1 399.4 445.4 401.3 445.8M315.0 449.0C318.2 448.9 326.5 447.8 334.0 448.4C341.5 449.0 352.6 450.8 360.2 452.4C367.8 454.0 374.4 456.7 379.9 458.3C385.4 459.9 390.8 461.6 393.0 462.2M283.3 423.0C283.0 427.3 281.9 441.4 281.7 449.0C281.5 456.6 281.9 463.5 282.3 468.7C282.7 473.9 283.7 478.3 284.0 480.2M197.4 506.8C200.5 506.4 208.7 505.1 216.2 504.7C223.7 504.3 232.6 504.7 242.4 504.7C252.2 504.7 265.8 504.1 275.1 504.7C284.4 505.2 290.4 506.6 298.0 508.0C305.6 509.4 312.5 512.0 321.0 513.0C329.5 514.0 344.2 513.8 348.8 514.0M350.4 514.0C353.7 513.7 362.6 512.2 370.0 512.3C377.4 512.4 390.6 514.2 394.7 514.6M198.0 529.3C199.4 528.4 202.3 525.0 206.4 523.7C210.5 522.5 213.7 521.8 222.7 521.8C231.7 521.8 254.1 523.4 260.4 523.7M262.0 521.8C266.4 522.1 281.1 523.2 288.2 523.7C295.3 524.2 299.4 524.2 304.6 525.0C309.8 525.8 312.5 528.4 319.3 528.6C326.1 528.8 341.1 526.4 345.5 526.0M348.8 527.0C352.3 527.8 362.9 530.8 370.0 532.0C377.1 533.2 387.9 533.8 391.5 534.2M181.7 569.4C183.6 570.2 188.3 572.3 193.0 574.0C197.7 575.7 202.5 577.9 209.6 579.4C216.7 580.9 226.0 582.5 235.8 583.3C245.6 584.1 263.1 583.9 268.6 584.0M401.3 445.8C401.6 443.9 401.4 437.4 403.0 434.4C404.6 431.4 409.1 427.5 411.0 427.8C412.9 428.1 414.4 432.5 414.4 436.0C414.4 439.5 411.6 446.8 411.0 449.0M411.0 449.0C413.2 449.6 421.3 451.0 424.2 452.4C427.1 453.8 428.9 455.7 428.4 457.3C427.9 458.9 424.1 461.6 421.0 462.2C417.9 462.8 411.4 460.9 409.5 460.6M409.5 460.6C408.7 462.8 406.4 470.6 404.5 473.6C402.6 476.6 399.9 478.9 398.0 478.6C396.1 478.3 393.8 474.7 393.0 472.0C392.2 469.3 393.0 463.8 393.0 462.2M394.7 514.6C395.2 513.2 396.5 508.3 398.0 506.4C399.5 504.5 402.4 502.4 403.6 503.0C404.9 503.6 405.6 506.1 405.5 509.7C405.4 513.3 403.2 520.9 403.0 524.4C402.8 527.9 402.3 529.6 404.5 531.0C406.7 532.4 413.2 531.5 416.0 532.6C418.8 533.7 420.2 536.7 421.0 537.5M424.2 509.7C423.7 512.1 421.8 518.7 421.0 524.4C420.2 530.1 419.9 537.5 419.3 544.0C418.7 550.5 418.2 556.7 417.6 563.7C417.1 570.7 416.3 582.3 416.0 586.0M444.0 373.5C442.9 375.4 439.1 380.4 437.5 385.0C435.9 389.6 435.1 395.5 434.2 401.3C433.3 407.1 433.1 411.7 432.4 419.6C431.7 427.6 430.4 438.6 429.8 449.0C429.2 459.4 428.8 471.4 429.1 481.8C429.4 492.2 430.3 502.6 431.7 511.3C433.1 520.0 435.7 528.2 437.3 534.2C438.9 540.2 440.8 545.1 441.5 547.3M504.6 355.5C503.5 356.0 502.4 356.0 498.0 358.7C493.6 361.4 484.9 366.9 478.4 371.8C471.8 376.7 464.2 382.7 458.7 388.2C453.2 393.7 449.1 399.1 445.6 404.6C442.1 410.1 439.1 416.1 437.5 421.0C435.9 425.9 435.5 430.7 435.8 434.0C436.1 437.3 438.6 439.5 439.1 440.6M446.0 371.0C445.0 373.2 441.5 380.0 440.0 384.0C438.5 388.0 437.5 393.2 437.0 395.0M579.9 363.6C580.4 367.2 582.6 377.6 583.1 385.0C583.6 392.4 583.9 400.2 583.1 407.8C582.3 415.4 580.1 423.7 578.2 430.8C576.3 437.9 574.4 444.4 571.7 450.4C569.0 456.4 563.5 464.1 561.9 466.8M579.9 363.6C579.6 369.3 579.3 387.4 578.2 398.0C577.1 408.6 575.5 418.2 573.3 427.5C571.1 436.8 567.8 447.7 565.1 453.7C562.4 459.7 558.4 461.9 557.0 463.5M464.2 433.3C465.8 432.6 468.1 430.1 473.5 429.2C478.9 428.3 489.8 427.7 496.5 427.7C503.2 427.7 506.8 427.6 514.0 429.2C521.2 430.8 534.5 435.1 539.9 437.0C545.3 438.9 545.2 439.8 546.3 440.3M472.5 430.1C472.2 435.8 471.3 454.6 470.7 464.3C470.1 474.0 469.4 480.0 468.8 488.3C468.2 496.6 467.6 505.4 467.0 514.0C466.4 522.6 465.4 535.7 465.1 540.0M543.6 438.5C543.1 444.6 542.2 463.1 540.8 475.4C539.4 487.7 537.3 500.6 535.3 512.3C533.3 524.0 529.9 540.0 528.8 545.5M463.3 488.3L468.8 488.3M465.1 540.0C468.7 539.7 479.5 538.3 486.4 538.0C493.3 537.7 500.7 537.8 506.7 538.0C512.7 538.2 517.4 538.5 522.3 539.0C527.2 539.5 533.9 540.5 536.2 540.8M539.9 437.5C539.4 442.3 538.3 456.7 537.1 466.1C535.9 475.5 534.0 485.2 532.5 493.8C531.0 502.4 529.6 510.3 527.9 517.8C526.2 525.3 523.2 535.5 522.3 539.0M496.5 428.3C496.2 434.1 495.5 453.1 494.7 463.4C493.9 473.7 492.8 481.6 491.9 490.0C491.0 498.4 490.0 506.0 489.1 514.0C488.2 522.0 486.8 534.0 486.4 538.0M514.0 429.2C513.5 435.1 512.1 454.0 511.3 464.3C510.5 474.6 509.9 482.4 509.4 491.0C508.9 499.6 508.9 508.2 508.5 516.0C508.1 523.8 507.0 534.3 506.7 538.0M470.7 464.3C474.7 464.1 487.9 463.4 494.7 463.4C501.5 463.4 504.2 463.9 511.3 464.3C518.4 464.8 532.8 465.8 537.1 466.1M468.8 488.3C472.6 488.6 485.1 489.6 491.9 490.0C498.7 490.4 502.6 490.4 509.4 491.0C516.2 491.6 528.6 493.3 532.5 493.8M467.0 514.0C470.7 514.0 482.2 513.7 489.1 514.0C496.0 514.3 502.0 515.4 508.5 516.0C515.0 516.6 524.7 517.5 527.9 517.8"/>
<path stroke-width="2" d="M238.5 108.4C238.7 109.3 239.2 111.9 239.5 114.0C239.8 116.1 240.3 119.8 240.5 121.0"/>
<path stroke-width="1.7" d="M272.8 109.2C274.8 109.1 280.5 108.5 285.0 108.4C289.5 108.3 296.1 108.5 300.0 108.8C303.9 109.1 305.9 109.4 308.2 110.0C310.5 110.6 313.0 112.1 314.0 112.5"/>
<path stroke-width="1.8" d="M293.5 128.8L296.5 127.0M349.0 296.0C349.1 297.3 349.3 301.4 349.4 304.0C349.5 306.6 349.6 310.2 349.6 311.4"/>
<path stroke-width="1.1" d="M387.3 36.0C386.6 38.3 384.3 45.5 382.8 50.0C381.3 54.5 379.1 60.8 378.3 63.0M384.8 46.0C384.1 48.3 381.9 55.3 380.3 60.0C378.7 64.7 376.1 71.7 375.3 74.0"/>
<path stroke-width="1.6" d="M244.2 161.7C245.0 160.5 246.8 156.4 249.0 154.4C251.2 152.4 254.0 151.3 257.3 149.5C260.6 147.7 265.1 145.2 268.7 143.7C272.2 142.2 275.3 141.3 278.6 140.5C281.9 139.7 284.8 138.9 288.4 138.8C292.0 138.7 296.4 139.0 300.0 139.8C303.6 140.6 306.8 142.1 309.8 143.7C312.8 145.3 315.6 147.2 318.0 149.5C320.4 151.8 322.6 154.3 324.5 157.6C326.4 160.8 328.1 165.2 329.5 169.0C330.9 172.8 331.8 177.3 332.7 180.6C333.6 183.9 334.8 187.3 335.2 188.7M245.0 158.5C246.2 157.7 249.7 154.9 252.0 153.5C254.3 152.1 257.8 150.8 259.0 150.2M336.8 189.6C339.4 185.9 347.6 173.2 352.4 167.5C357.2 161.8 363.3 157.2 365.5 155.2M161.7 400.0C160.6 402.3 156.7 408.7 155.0 413.6C153.3 418.5 151.9 424.2 151.5 429.5C151.1 434.8 152.5 442.8 152.7 445.4M567.0 459.0C566.4 464.4 564.9 480.8 563.5 491.7C562.1 502.6 560.6 513.0 558.5 524.4C556.4 535.8 554.0 549.7 551.0 560.0C548.0 570.3 542.2 581.7 540.4 586.0"/>
<path stroke-width="1.5" d="M256.5 186.3C257.4 185.1 260.2 181.3 262.2 179.0C264.2 176.7 266.0 174.3 268.7 172.4C271.4 170.5 275.3 168.7 278.6 167.5C281.9 166.3 284.8 165.5 288.4 165.0C292.0 164.5 296.7 163.7 300.0 164.4C303.3 165.1 305.5 167.4 308.2 169.0C310.9 170.6 313.9 172.1 316.4 174.0C318.9 175.9 321.1 178.4 323.0 180.6C324.9 182.8 326.6 184.8 327.8 187.0C329.0 189.2 329.9 192.5 330.3 193.6M0.0 468.6C3.3 470.8 12.5 477.2 19.6 481.6C26.7 486.0 35.0 490.3 42.6 494.7C50.2 499.1 58.4 503.4 65.5 507.8C72.6 512.2 80.1 517.2 85.0 521.0C89.9 524.8 93.3 529.2 95.0 530.8"/>
<path stroke-width="2.2" d="M286.8 193.2L287.8 194.2M302.2 193.8L303.2 194.8"/>
<path stroke-width="1.9" d="M305.0 289.3C306.8 288.6 311.9 286.9 316.0 285.3C320.1 283.7 327.2 280.7 329.5 279.8"/>
<path stroke-width="1" d="M309.0 286.5C310.5 285.9 314.8 284.4 318.0 283.2C321.2 282.0 326.3 279.9 328.0 279.2"/>
<path stroke-width="0.9" d="M499.2 356.3a2.8 1.5 0 1 0 5.6 0a2.8 1.5 0 1 0 -5.6 0"/>
</g>
</svg>

<div id="panel" class="abs">
  <div id="ptitle" class="abs"><span style="position:absolute;left:9.5px;top:0">Colour</span></div>
  <div class="abs" style="left:0;top:30px;width:41px;height:465px;background:#444;border-left:1px solid #6e6e6e;border-top:1px solid #333;box-sizing:border-box"></div>
  <div class="abs" style="left:1px;top:31px;width:1px;height:464px;background:#333"></div>
  <div class="abs" style="left:2px;top:32px;width:1px;height:463px;background:#626262"></div>
  <div class="abs" style="left:2px;top:31px;width:39px;height:1px;background:#626262"></div>
  <!-- hamburger -->
  <div class="abs" style="left:9px;top:38px;width:10px;height:2px;background:#c8c8c8"></div>
  <div class="abs" style="left:9px;top:42px;width:10px;height:2px;background:#c8c8c8"></div>
  <div class="abs" style="left:9px;top:46px;width:10px;height:2px;background:#c8c8c8"></div>
  <div class="abs" style="left:18px;top:48px;width:0;height:0;border-left:4px solid transparent;border-bottom:4px solid #c8c8c8"></div>
  <!-- triangle -->
  <div class="abs" style="left:9px;top:72px;width:0;height:0;border-left:6px solid transparent;border-right:6px solid transparent;border-top:7px solid #b4b4b4"></div>
  <!-- list -->
  <div class="abs" style="left:9px;top:94px;width:32px;height:155px;background:#1a1a1a;border-left:1px solid #333;box-sizing:border-box"></div>
  <div class="abs" style="left:10px;top:113px;width:31px;height:20px;background:#21c4e0"></div>
  <div class="abs" style="left:9px;top:249px;width:32px;height:12px;background:#575757"></div>
  <div class="abs" style="left:18px;top:274px;width:10px;height:2px;background:#c8c8c8"></div>
  <!-- swatches -->
  <div class="abs" style="left:9px;top:296px;width:32px;height:192px;background:#2b2b2b;border-left:1px solid #505050;border-top:1px solid #333;border-bottom:1px solid #505050;box-sizing:border-box"></div>
  <div class="abs" style="left:10px;top:297px;width:31px;height:140px;background:#1c1c1c"></div>
  <div class="sw" style="top:300px;background:#000"></div>
  <div class="sw" style="top:320px;background:#fff"></div>
  <div class="sw" style="top:340px;background:#f00"></div>
  <div class="sw" style="top:360px;background:#0f0"></div>
  <div class="sw" style="top:380px;background:#00f"></div>
  <div class="sw" style="top:400px;background:#000"></div>
  <div class="abs" style="left:10px;top:418px;width:31px;height:18px;border:2px dotted #2ccbea;box-sizing:border-box;background:#1c1c1c"></div>
  <div class="sw" style="top:420px;background:#000"></div>
</div>

<div id="bottom" class="abs">
  <div class="abs" style="left:0;top:0;width:611px;height:1px;background:#858585"></div>
  <div id="vals">
    <span style="left:-13px;color:#19ee19">1.00000</span>
    <span style="left:32px;color:#2aaaff">1.00000</span>
    <span style="left:77.5px;color:#bcbcbc">1.00000</span>
  </div>
  <div id="hline" class="abs"></div>
  <div id="band" class="abs"></div>
  <div class="abs" style="left:418px;top:29px;width:32px;height:12px;background:#444"></div>
  <div id="redline" class="abs"></div>
  <div id="lower" class="abs"></div>


  <div class="lbl" style="left:-4px;top:81px">p</div>
  <div class="inp" style="left:12px;top:74px;width:47px;height:24px;"><span style="position:absolute;left:3px;top:2px;letter-spacing:-0.6px">713</span></div>
  <div class="abs" style="left:60px;top:75px;width:15px;height:11px;background:#1b1b1b;border:1px solid #565656;box-sizing:border-box"></div>
  <div class="abs" style="left:60px;top:87px;width:15px;height:11px;background:#1b1b1b;border:1px solid #565656;box-sizing:border-box"></div>
  <div class="abs" style="left:63.5px;top:78px;width:0;height:0;border-left:4px solid transparent;border-right:4px solid transparent;border-bottom:4.5px solid #b4b4b4"></div>
  <div class="abs" style="left:63.5px;top:90px;width:0;height:0;border-left:4px solid transparent;border-right:4px solid transparent;border-top:4.5px solid #b4b4b4"></div>
  <div class="lbl" style="left:82px;top:80.5px;letter-spacing:-0.6px;transform:scaleX(0.91);transform-origin:0 50%">FPS</div>
  <div class="inp" style="left:107px;top:74px;width:54px;height:24px;"><span style="position:absolute;left:5px;top:2px;letter-spacing:-0.4px">24</span></div>
  <div class="abs" style="left:160px;top:74px;width:16px;height:24px;background:#1b1b1b;border:1px solid #565656;box-sizing:border-box"></div>
  <div class="abs" style="left:164.5px;top:84px;width:0;height:0;border-left:4px solid transparent;border-right:4px solid transparent;border-top:5px solid #b4b4b4"></div>
  <!-- toolbar handle -->
  <div class="abs" style="left:207px;top:70px;width:8px;height:33px;background:linear-gradient(90deg,#6e6e6e,#545454);border:1px solid #262626;box-sizing:border-box"></div>
  <div class="abs" style="left:216px;top:74px;width:28px;height:24px;background:#1b1b1b;border:1px solid #303030;box-sizing:border-box"></div>
  <div class="abs" style="left:244px;top:74px;width:16px;height:24px;background:#1b1b1b;border:1px solid #565656;box-sizing:border-box"></div>
  <div class="abs" style="left:248px;top:84px;width:0;height:0;border-left:4px solid transparent;border-right:4px solid transparent;border-top:5px solid #b4b4b4"></div>
  <svg class="abs" style="left:0;top:0" width="611" height="119" viewBox="0 586 611 119" fill="none">
    <!-- chevron splitter -->
    <path d="M417.5 616V626M433.5 616V626M450.5 616V626" stroke="#c0c0c0" stroke-width="1"/>
    <path d="M421.5 623L426 619L430.5 623M437 619L441.5 623L446 619" stroke="#c8c8c8" stroke-width="1.6"/>
    <g stroke-linecap="round" stroke-linejoin="round">
 <!-- icon0 curve button -->
 <path d="M219.3 680C219.3 670 225 664.6 234.8 664.6" stroke="#9a9a9a" stroke-width="1.3"/>
 <!-- icon1 -->
 <path d="M270 681V676.5C270 673.5 271.5 672.5 275 672.5H280C283.5 672.5 285 671 285 668V662.5" stroke="#a8a8a8" stroke-width="1.3"/>
 <path d="M268 672.5H286" stroke="#e8632c" stroke-width="1.3"/>
 <path d="M266.5 672.5l2-1.8v3.6zM287.5 672.5l-2-1.8v3.6z" fill="#e8632c" stroke="#e8632c" stroke-width="0.6"/>
 <rect x="275" y="670.7" width="3.6" height="3.6" fill="#fff"/>
 <!-- icon2 -->
 <path d="M301.5 681C301.5 672 306 667 316 667" stroke="#a8a8a8" stroke-width="1.3"/>
 <path d="M303 665.3H315" stroke="#e8632c" stroke-width="1.3"/>
 <circle cx="302.6" cy="665.2" r="1.5" fill="#e8632c"/>
 <rect x="314.5" y="664.4" width="3.6" height="3.6" fill="#fff"/>
 <!-- icon3 -->
 <path d="M338 667C348 667 352 672 352 681" stroke="#a8a8a8" stroke-width="1.3"/>
 <path d="M338 665.3H350" stroke="#e8632c" stroke-width="1.3"/>
 <circle cx="350.8" cy="665.2" r="1.5" fill="#e8632c"/>
 <rect x="334.6" y="664.4" width="3.6" height="3.6" fill="#fff"/>
 <!-- icon4 -->
 <path d="M369 681V676C369 673 370.5 671.8 374 671.8H379C382.5 671.8 383.8 670 383.8 667V663.5" stroke="#a8a8a8" stroke-width="1.3"/>
 <path d="M367 671.8H385.5" stroke="#e8632c" stroke-width="1.3"/>
 <path d="M365.8 671.8l2-1.8v3.6zM386.5 671.8l-2-1.8v3.6z" fill="#e8632c" stroke="#e8632c" stroke-width="0.6"/>
 <rect x="373.4" y="670" width="3.6" height="3.6" fill="#fff"/>
 <rect x="377.5" y="676" width="9" height="5.5" fill="#fff" stroke="#27c3e0" stroke-width="1.4"/>
 <!-- icon5 -->
 <path d="M410 665L405 672.5M416.3 671.6L411.8 679" stroke="#a8a8a8" stroke-width="1.3"/>
 <path d="M401.3 664.5H411.3M399.5 672.6H410M410 671.3H418M406.3 679.3H415.5" stroke="#e8632c" stroke-width="1.3"/>
 <!-- icon6 -->
 <rect x="437" y="668.5" width="14.5" height="9.5" fill="#b9dbe6" stroke="#8fb4c0" stroke-width="0.6"/>
 <path d="M440 670L449.5 677M449.5 670L440 677" stroke="#1a1a1a" stroke-width="1.2"/>
 <circle cx="436.4" cy="667.2" r="3.8" fill="#1fc0e4"/>
 <path d="M434.2 667.2H438.6M436.4 665V669.4" stroke="#111" stroke-width="1.1"/>
 <!-- icon7 -->
 <rect x="470" y="670" width="13" height="8" fill="#9cc3d2" stroke="#7aa0ae" stroke-width="0.5"/>
 <rect x="468" y="672" width="13" height="8" fill="#c4e2ec" stroke="#8fb4c0" stroke-width="0.5"/>
 <path d="M470 677.5h1.5m1.5 0h1.5m1.5 0h1.5" stroke="#333" stroke-width="1"/>
 <path d="M473 663.5L483 667.6M483 667.6l-3.6.4M483 667.6l-2-3" stroke="#b8b8b8" stroke-width="1.1"/>
 <circle cx="469" cy="667" r="3.8" fill="#1fc0e4"/>
 <path d="M466.8 667H471.2M469 664.8V669.2" stroke="#111" stroke-width="1.1"/>
 <!-- icon8 -->
 <path d="M501.5 679H515.3V665.5" stroke="#151515" stroke-width="1.6"/>
 <rect x="499.3" y="677" width="4" height="4" fill="#e8212b"/>
 <rect x="513.3" y="663.3" width="4" height="4" fill="#e8212b"/>
 <!-- icon9/10 circles -->
 <circle cx="541.3" cy="665.5" r="3.6" fill="#1fc0e4"/>
 <path d="M539.2 665.5H543.4M541.3 663.4V667.6" stroke="#111" stroke-width="1.1"/>
 <circle cx="574.3" cy="665.5" r="3.6" fill="#1fc0e4"/>
 <path d="M572.2 665.5H576.4" stroke="#111" stroke-width="1.1"/>
 <!-- icon11 -->
 <path d="M601 677C606 676 606 669 611 668" stroke="#3f7fd0" stroke-width="1.3"/>
 <circle cx="600.7" cy="677" r="2.4" fill="#9cc8ea"/>
</g>
<text x="534" y="681" font-family="Liberation Sans, sans-serif" font-size="12" fill="#b0b0b0">KF</text>
<text x="567" y="681" font-family="Liberation Sans, sans-serif" font-size="12" fill="#b0b0b0">KF</text>

  </svg>
  <div id="ruler" class="abs">
<span style="left:1.1px">30</span><span style="left:21.1px">40</span><span style="left:41.1px">50</span><span style="left:61.1px">60</span><span style="left:81.1px">70</span><span style="left:101.1px">80</span><span style="left:121.1px">90</span><span style="left:141.1px">100</span><span style="left:161.1px">110</span><span style="left:181.1px">120</span><span style="left:201.1px">130</span><span style="left:221.1px">140</span><span style="left:241.1px">150</span><span style="left:261.1px">160</span><span style="left:281.1px">170</span><span style="left:301.1px">180</span><span style="left:321.1px">190</span><span style="left:341.1px">200</span><span style="left:361.1px">210</span><span style="left:381.1px">220</span><span style="left:401.1px">230</span><span style="left:421.1px">240</span><span style="left:441.1px">250</span><span style="left:461.1px">260</span><span style="left:481.1px">270</span><span style="left:501.1px">280</span><span style="left:521.1px">290</span><span style="left:541.1px">300</span><span style="left:561.1px">310</span><span style="left:581.1px">320</span><span style="left:601.1px">330</span>
  </div>
  <div class="abs" style="left:550px;top:104px;width:1px;height:15px;background:#7a1010"></div>
</div>
</body></html>
